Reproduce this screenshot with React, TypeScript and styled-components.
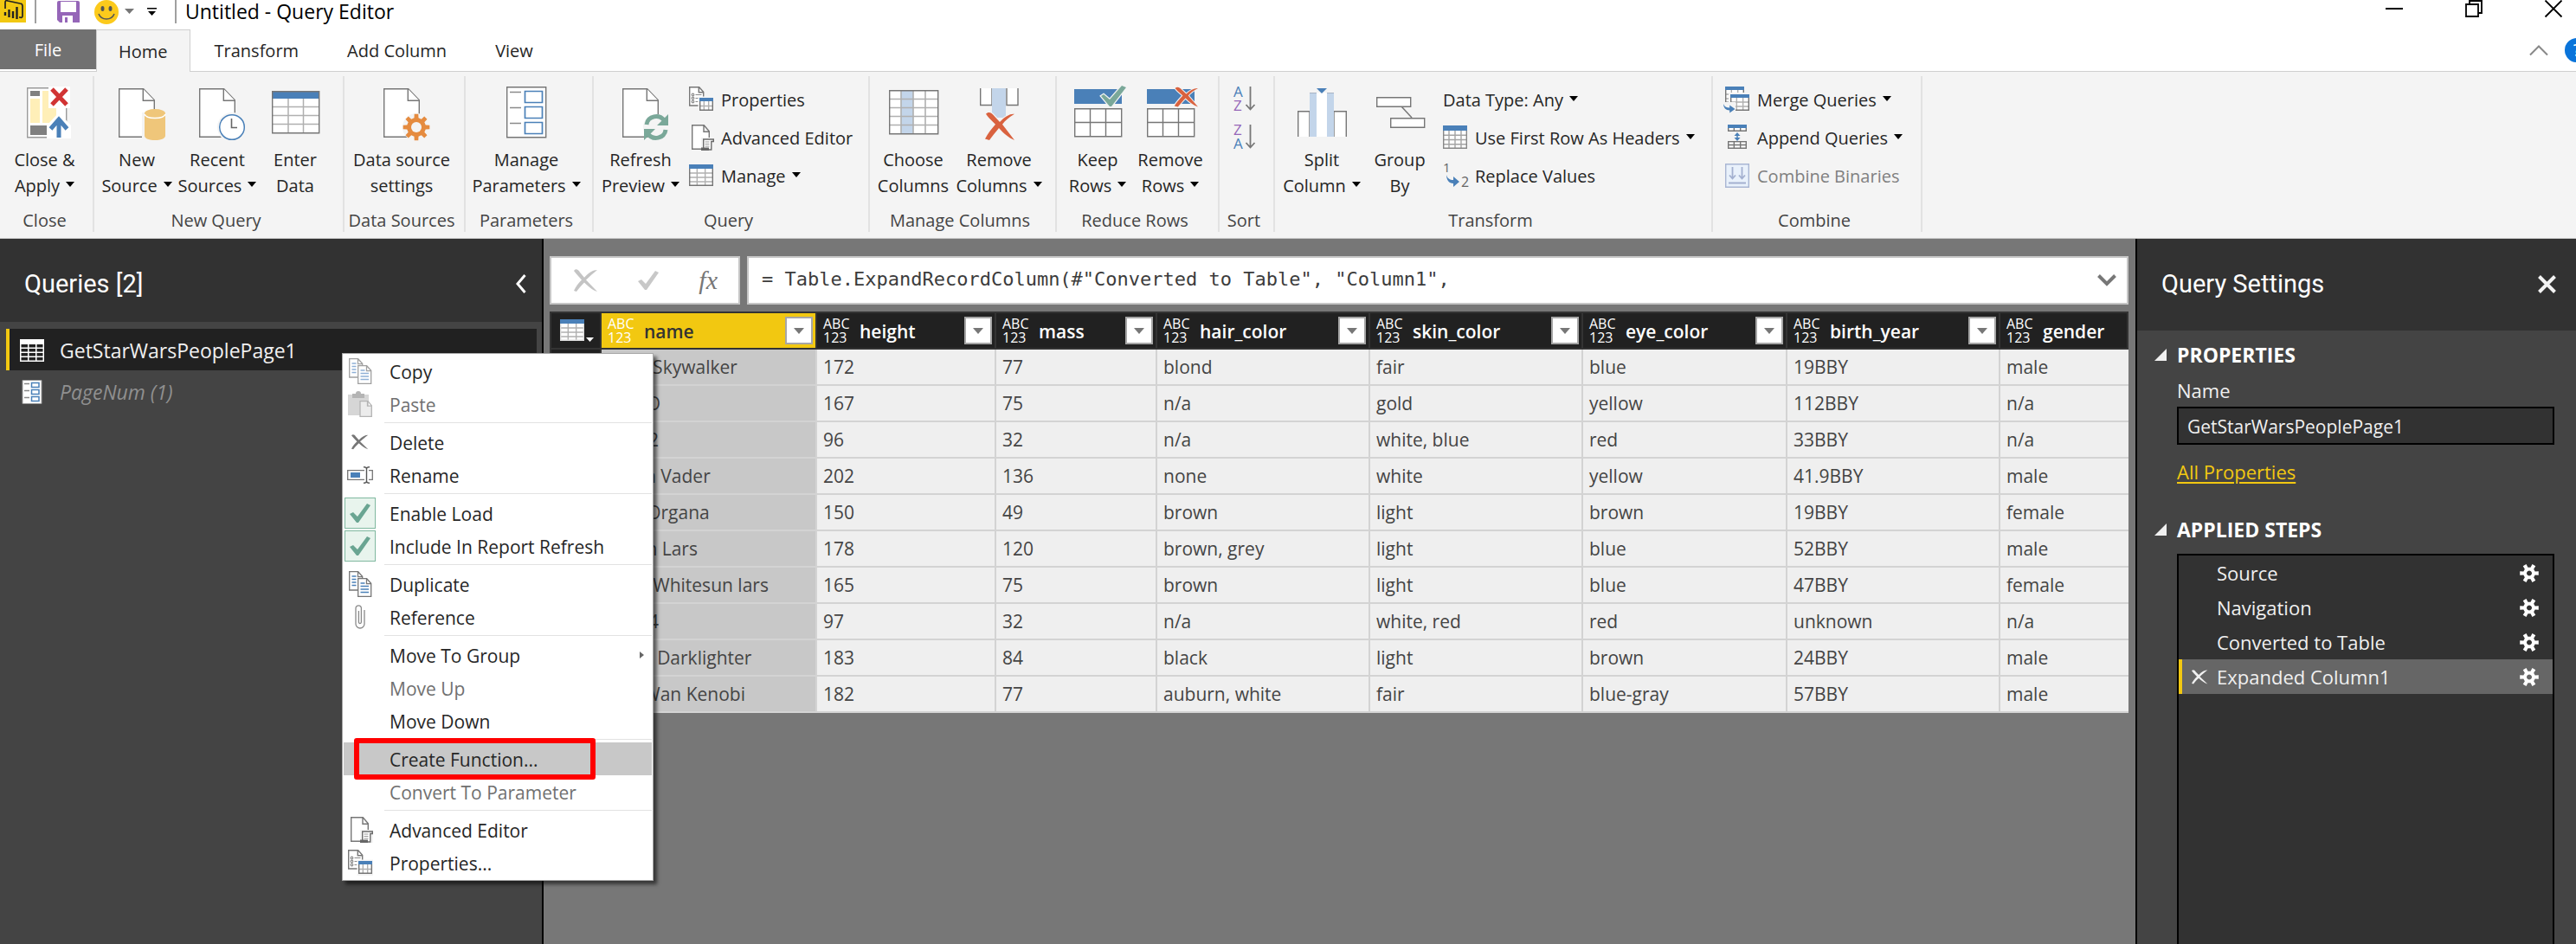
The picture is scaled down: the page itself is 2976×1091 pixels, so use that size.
import React from 'react';
import styled, { createGlobalStyle, css } from 'styled-components';

const BLUE = '#4a80b8';
const LIGHT_BLUE = '#c3d5ea';
const GREY = '#767676';
const YELLOW = '#f2c811';
const GREEN = '#7aa899';
const RED = '#d9623f';

const GlobalStyle = createGlobalStyle`
  *, *::before, *::after { box-sizing: border-box; }
  body {
    margin: 0;
    overflow: hidden;
    font-family: "Open Sans", "Noto Sans", sans-serif;
    font-size: 21px;
    line-height: 30px;
    color: #262626;
  }
  button, input {
    margin: 0;
    padding: 0;
    border: 0;
    border-radius: 0;
    background: none;
    font: inherit;
    color: inherit;
  }
  svg { display: block; flex: none; overflow: visible; }
  ul, ol { margin: 0; padding: 0; list-style: none; }
  h1, h2, h3, p { margin: 0; font: inherit; }
`;

/* ---------- shell ---------- */

const Shell = styled.div`
  display: flex;
  flex-direction: column;
  height: 100vh;
  background: #fff;
`;

const TitleBar = styled.header`
  display: flex;
  align-items: flex-start;
  height: 34px;
  color: #000;
`;

const QuickAccess = styled.div`
  display: flex;
  align-items: flex-start;
`;

const ToolButton = styled.button<{ $gap?: number }>`
  margin-left: ${p => p.$gap ?? 0}px;
`;

const BarDivider = styled.span<{ $gap: number }>`
  width: 2px;
  height: 27px;
  margin-left: ${p => p.$gap}px;
  background: #a0a0a0;
`;

const AppTitle = styled.h1`
  flex: 1;
  padding-left: 10px;
  font-size: 23px;
  line-height: 26px;
`;

const WindowControls = styled.div`
  display: flex;
  gap: 72px;
  padding-right: 16px;
`;

const TabBar = styled.nav`
  display: flex;
  height: 49px;
  border-bottom: 1px solid #cfcfcf;
  font-size: 20px;
`;

const Tab = styled.button<{ $kind?: 'file' | 'active' }>`
  height: 48px;
  padding: 2px 28px 0;
  ${p => p.$kind === 'file' && css`
    width: 111px;
    height: 46px;
    color: #fff;
    background: #717171;
  `}
  ${p => p.$kind === 'active' && css`
    height: 49px;
    padding: 2px 25px 0;
    border: 1px solid #cfcfcf;
    border-bottom: 0;
    background: #f4f4f4;
  `}
`;

const TabTools = styled.div`
  display: flex;
  align-items: center;
  gap: 19px;
  height: 48px;
  margin-left: auto;
  overflow: hidden;
`;

const HelpClip = styled.button`
  width: 13px;
  overflow: hidden;
`;

/* ---------- ribbon ---------- */

const RibbonBar = styled.div`
  display: flex;
  height: 193px;
  padding: 5px 0 7px 2px;
  border-bottom: 1px solid #c8c8c8;
  background: #f4f4f4;
  font-size: 20px;
`;

const Group = styled.section<{ $width: number }>`
  display: flex;
  flex-direction: column;
  flex: none;
  width: ${p => p.$width}px;
  padding: 12px 6px 0 0;
  border-right: 2px solid #e2e2e2;
  white-space: nowrap;
`;

const GroupBody = styled.div`
  display: flex;
  flex: 1;
`;

const GroupCaption = styled.h2`
  height: 28px;
  text-align: center;
  color: #444;
`;

const BigButton = styled.button<{ $width: number }>`
  display: flex;
  flex-direction: column;
  align-items: center;
  align-self: flex-start;
  gap: 6px;
  width: ${p => p.$width}px;
`;

const SmallColumn = styled.div<{ $indent: number }>`
  display: flex;
  flex-direction: column;
  align-items: flex-start;
  gap: 14px;
  padding-left: ${p => p.$indent}px;
`;

const SortColumn = styled(SmallColumn)`
  flex: 1;
  align-items: center;
`;

const SmallButton = styled.button`
  display: flex;
  align-items: center;
  gap: 8px;
  height: 30px;
  &:disabled { color: #808080; }
`;

const SmallText = styled.span`
  padding-top: 2px;
`;

const CaretSvg = styled.svg`
  display: inline-block;
  margin-left: 7px;
  vertical-align: 6px;
`;

const Caret = () => (
  <CaretSvg width="10" height="6" viewBox="0 0 10 6"><path d="M0 0h10L5 6z" fill="#000" /></CaretSvg>
);

/* ---------- workspace ---------- */

const Workspace = styled.main`
  position: relative;
  display: flex;
  flex: 1;
  min-height: 0;
  background: #777;
`;

const QueriesPane = styled.aside`
  display: flex;
  flex: none;
  flex-direction: column;
  width: 628px;
  border-right: 2px solid #000;
  background: #444;
  color: #f0f0f0;
`;

const PaneHeader = styled.div<{ $height: number; $end: number }>`
  display: flex;
  align-items: flex-start;
  justify-content: space-between;
  flex: none;
  height: ${p => p.$height}px;
  padding: 35px ${p => p.$end}px 0 28px;
  background: #323232;
`;

const PaneTitle = styled.h2`
  font-family: Roboto, "Open Sans", sans-serif;
  font-size: 29px;
  line-height: 34px;
  color: #fff;
`;

const PaneButton = styled.button`
  height: 34px;
`;

const QueryList = styled.ul`
  padding: 8px 6px 0 7px;
`;

const QueryItem = styled.button<{ $active?: boolean }>`
  display: flex;
  align-items: center;
  gap: 18px;
  width: 100%;
  height: 48px;
  padding: 2px 0 0 12px;
  border-left: 4px solid transparent;
  font-size: 23px;
  text-align: left;
  ${p => p.$active ? css`
    border-color: ${YELLOW};
    background: #212121;
  ` : css`
    font-style: italic;
    color: #909090;
  `}
`;

const EditorPane = styled.section`
  display: flex;
  flex: 1;
  flex-direction: column;
  gap: 8px;
  min-width: 0;
  padding: 20px 8px 0 7px;
`;

const FormulaRow = styled.div`
  display: flex;
  gap: 8px;
  height: 56px;
`;

const FormulaActions = styled.div`
  display: flex;
  align-items: center;
  justify-content: space-between;
  width: 220px;
  padding: 0 24px 0 26px;
  border: 2px solid #c6c6c6;
  background: #fff;
`;

const FxButton = styled.button`
  font-family: "Liberation Serif", serif;
  font-size: 30px;
  font-style: italic;
  color: #777;
`;

const FormulaBox = styled.div`
  display: flex;
  align-items: center;
  flex: 1;
  padding: 0 12px 0 15px;
  border: 2px solid #c6c6c6;
  background: #fff;
`;

const FormulaInput = styled.input`
  flex: 1;
  min-width: 0;
  height: 48px;
  padding-bottom: 3px;
  font-family: "DejaVu Sans Mono", "Liberation Mono", monospace;
  font-size: 22px;
  color: #3c3c3c;
`;

const GridClip = styled.div`
  overflow: hidden;
`;

const DataTable = styled.table`
  width: 100%;
  border-spacing: 0;
  table-layout: fixed;
  border-left: 2px solid #333;
`;

const HeadCell = styled.th<{ $active?: boolean }>`
  height: 44px;
  padding: 0;
  border: 2px solid #333;
  border-left: 0;
  background: ${p => (p.$active ? YELLOW : '#212121')};
  color: ${p => (p.$active ? '#333' : '#fff')};
  font-weight: 600;
  text-align: left;
`;

const HeadContent = styled.div`
  display: flex;
  align-items: center;
  gap: 13px;
  height: 40px;
  padding: 0 3px 0 7px;
`;

const TypeMark = styled.span`
  width: 29px;
  font-size: 16px;
  font-weight: 400;
  line-height: 16px;
  color: #fff;
`;

const HeadName = styled.span`
  flex: 1;
  padding-top: 2px;
`;

const FilterButton = styled.button`
  display: grid;
  place-items: center;
  width: 32px;
  height: 32px;
  border: 2px solid #a6a6a6;
  background: #fff;
`;

const TableCornerButton = styled.button`
  display: flex;
  align-items: flex-end;
  gap: 1px;
  padding-left: 10px;
`;

const RowHead = styled.td`
  border-right: 2px solid #333;
  border-bottom: 2px solid #333;
  background: #212121;
`;

const Cell = styled.td<{ $active?: boolean }>`
  height: 42px;
  padding: 0 0 0 7px;
  border-right: 2px solid #d3d3d3;
  border-bottom: 2px solid #d3d3d3;
  background: ${p => (p.$active ? '#c8c8c8' : '#efefef')};
  color: #444;
  white-space: nowrap;
  &:last-child { border-right: 0; }
`;

/* ---------- settings ---------- */

const SettingsPane = styled.aside`
  display: flex;
  flex: none;
  flex-direction: column;
  width: 509px;
  border-left: 2px solid #000;
  background: #444;
  color: #f0f0f0;
  font-size: 22px;
`;

const SettingsBody = styled.div`
  display: flex;
  flex: 1;
  flex-direction: column;
  padding: 13px 25px 0 20px;
`;

const SectionTitle = styled.h3`
  display: flex;
  align-items: center;
  gap: 12px;
  height: 30px;
  font-size: 23px;
  font-weight: 700;
  color: #fff;
`;

const Fields = styled.div`
  display: flex;
  flex-direction: column;
  align-items: flex-start;
  margin-left: 26px;
  padding: 11px 0 37px;
`;

const NameInput = styled.input`
  width: 100%;
  height: 44px;
  margin: 4px 0 16px;
  padding: 2px 10px 0;
  border: 2px solid #000;
  background: #323232;
  font-size: 21px;
`;

const PropertiesLink = styled.a`
  color: ${YELLOW};
  text-decoration: underline;
  text-underline-offset: 3px;
`;

const StepList = styled.ol`
  flex: 1;
  margin: 13px 0 0 26px;
  border: 2px solid #000;
  border-bottom: 0;
  background: #323232;
`;

const Step = styled.li<{ $active?: boolean }>`
  display: flex;
  align-items: center;
  height: 40px;
  padding: 0 16px 0 0;
  border-left: 4px solid ${p => (p.$active ? YELLOW : 'transparent')};
  background: ${p => (p.$active ? '#666' : 'transparent')};
  background-clip: padding-box;
`;

const StepMark = styled.span`
  width: 40px;
  padding-left: 11px;
`;

const StepName = styled.span`
  flex: 1;
`;

/* ---------- context menu ---------- */

const Menu = styled.div`
  position: absolute;
  left: 395px;
  top: 132px;
  width: 360px;
  padding: 1px;
  border: 1px solid #a8a8a8;
  background: #fff;
  box-shadow: 4px 4px 4px rgba(0, 0, 0, 0.55);
  color: #262626;
`;

const rowStyle = css`
  display: flex;
  align-items: center;
  width: 100%;
  height: 38px;
  text-align: left;
  white-space: nowrap;
`;

const MenuItem = styled.button<{ $hot?: boolean }>`
  ${rowStyle}
  background: ${p => (p.$hot ? '#c8c8c8' : 'transparent')};
  &:disabled { color: #707070; }
`;

const MenuCheckRow = styled.label`
  ${rowStyle}
`;

const MenuIcon = styled.span`
  display: grid;
  place-items: center;
  flex: none;
  width: 38px;
  height: 38px;
  margin-right: 15px;
  > * { grid-area: 1 / 1; }
`;

const MenuText = styled.span`
  flex: 1;
  padding-top: 2px;
`;

const MenuTick = styled.input`
  appearance: none;
  width: 36px;
  height: 36px;
  border: 1px solid #7fb89f;
  background: #e8f4ed;
`;

const TickMark = styled.svg`
  pointer-events: none;
`;

const MenuRule = styled.hr`
  height: 1px;
  margin: 2px 0 3px 47px;
  border: 0;
  background: #e2e2e2;
`;

const SubmenuArrow = styled.svg`
  margin-right: 9px;
`;

const Callout = styled.div`
  position: absolute;
  left: 13px;
  top: 444px;
  width: 279px;
  height: 48px;
  border: 6px solid #ff0000;
  border-radius: 3px;
  pointer-events: none;
`;

/* ---------- drawings ---------- */

const Big = ({ children }: { children: React.ReactNode }) => (
  <svg width="68" height="64" viewBox="0 0 68 64" fill="none" aria-hidden="true">{children}</svg>
);

const Page = () => (
  <g stroke={GREY} strokeWidth="1.4" fill="#fff">
    <path d="M13.7 2.7h28l12.6 13v42.6H13.7z" />
    <path d="M41.3 2.7v13.6h13" />
  </g>
);

const gearPath = (cx: number, cy: number, outer: number, inner: number, n: number) => {
  const pts: string[] = [];
  const step = (Math.PI * 2) / n;
  for (let i = 0; i < n; i++) {
    const a = i * step;
    [[-0.29, inner], [-0.19, outer], [0.19, outer], [0.29, inner]].forEach(([f, r]) => {
      pts.push(`${(cx + r * Math.cos(a + f * step)).toFixed(2)} ${(cy + r * Math.sin(a + f * step)).toFixed(2)}`);
    });
  }
  return `M${pts.join('L')}z`;
};

const lines = (x: number[], y: number[], x0: number, x1: number, y0: number, y1: number) =>
  x.map(v => `M${v} ${y0}V${y1}`).join('') + y.map(v => `M${x0} ${v}H${x1}`).join('');

const brushX = 'M2 4C5-1 9 2 12 8L18 17C24 8 30 3 35 4C29 9 24 15 21 21L35 47C28 43 22 35 17 27C13 34 9 41 6 47L1 45C4 36 9 28 13 21L6 11C4 8 3 6 2 4z';

const CloseApplyIcon = () => (
  <Big>
    <path d="M13.7 1.7h45v57h-45z" fill="#fff" stroke="#9a9a9a" strokeWidth="1.4" />
    <path d="M17 5h11v6H17zM17 45h20v11H17z" fill="#808080" />
    <path d="M17 14h11v28H17zM31 5h16v37H31z" fill="#ffefb8" />
    <path d="M38 0h25v25H38zM36 60V45L50 30l14 15v15z" fill="#fff" />
    <path d="M42 3l17 18M59 3L42 21" stroke="#d13434" strokeWidth="5" />
    <path d="M50 59V38M40.5 49L50 38l9.5 11" stroke={BLUE} strokeWidth="5" />
  </Big>
);

const NewSourceIcon = () => (
  <Big>
    <Page />
    <path d="M40 30h28v34H40z" fill="#f4f4f4" />
    <path d="M43 31v26c0 3 5.5 5 12 5s12-2 12-5V31z" fill="#efc67a" />
    <ellipse cx="55" cy="31" rx="12" ry="5" fill="#efc67a" />
    <path d="M43 32c1 3 6 4.5 12 4.5S66 35 67 32" stroke="#fff" strokeWidth="1.5" />
  </Big>
);

const RecentIcon = () => (
  <Big>
    <Page />
    <circle cx="51" cy="47" r="17" fill="#f4f4f4" />
    <circle cx="51" cy="47" r="14.3" fill="#fff" stroke={BLUE} strokeWidth="1.5" />
    <path d="M50.5 37v10.5H57" stroke="#666" strokeWidth="1.6" />
  </Big>
);

const EnterDataIcon = () => (
  <Big>
    <path d="M7.7 5.7h54v48h-54z" fill="#fff" />
    <path d="M7 5h55v9H7z" fill={BLUE} />
    <path d={lines([26, 43.5], [23.5, 33.5, 43.5], 8, 62, 14, 54)} stroke="#b0b0b0" strokeWidth="1.5" />
    <path d="M7.7 5.7h54v48h-54z" stroke={GREY} strokeWidth="1.4" />
  </Big>
);

const DataSourceIcon = () => (
  <Big>
    <Page />
    <circle cx="51" cy="47" r="16" fill="#f4f4f4" />
    <path d={gearPath(51, 47, 15.5, 11, 8)} fill="#e58b3f" />
    <circle cx="51" cy="47" r="6" fill="#f4f4f4" />
  </Big>
);

const ParametersIcon = () => (
  <Big>
    <path d="M11.7 .7h45v58h-45z" fill="#fff" stroke={GREY} strokeWidth="1.4" />
    <path d="M15 6.5h13M15 24.5h13M15 42.5h13" stroke="#8a8a8a" strokeWidth="1.4" />
    <path d="M32.5 5.5h20v13h-20zM32.5 23.5h20v13h-20zM32.5 41.5h20v13h-20z" stroke={BLUE} strokeWidth="1.7" />
  </Big>
);

const RefreshIcon = () => (
  <Big>
    <Page />
    <circle cx="52" cy="47" r="15" fill="#f4f4f4" />
    <path d="M41 44c1-10 15-13 21-4M63 50c-1 10-15 13-21 4" stroke={GREEN} strokeWidth="5" />
    <path d="M66 32v13H53zM38 62V49h13z" fill={GREEN} />
  </Big>
);

const ChooseColumnsIcon = () => (
  <Big>
    <path d="M6.7 4.7h56v50h-56z" fill="#fff" />
    <path d="M20 5h14v50H20z" fill={LIGHT_BLUE} />
    <path d={lines([20, 34, 48], [14.5, 24.5, 34.5, 44.5], 7, 63, 5, 55)} stroke="#b0b0b0" strokeWidth="1.6" />
    <path d="M6.7 4.7h56v50h-56z" stroke={GREY} strokeWidth="1.4" />
  </Big>
);

const RemoveColumnsIcon = () => (
  <Big>
    <path d="M12.7 2v19.5H26V2M56 2v19.5H43V2" fill="#fff" stroke={GREY} strokeWidth="1.4" />
    <path d="M26 2h16v34H26z" fill={LIGHT_BLUE} />
    <path d={brushX} transform="translate(17 29) scale(1 .7)" fill={RED} stroke="#f4f4f4" strokeWidth="3" paintOrder="stroke" />
  </Big>
);

const RowsBase = () => (
  <>
    <path d="M7 3h55v17H7z" fill={BLUE} />
    <path d="M7.7 25.7h54v32h-54z" fill="#fff" stroke={GREY} strokeWidth="1.4" />
    <path d={lines([25.5, 43.5], [41.5], 7, 62, 26, 58)} stroke={GREY} strokeWidth="1.4" />
  </>
);

const KeepRowsIcon = () => (
  <Big>
    <RowsBase />
    <path d="M38 11l3-2 7 6L62-1l5 2-17 22h-2z" fill={GREEN} stroke="#f4f4f4" strokeWidth="2.5" paintOrder="stroke" />
  </Big>
);

const RemoveRowsIcon = () => (
  <Big>
    <RowsBase />
    <path d={brushX} transform="translate(38 0) scale(.8 .5)" fill={RED} stroke="#f4f4f4" strokeWidth="3" paintOrder="stroke" />
  </Big>
);

const SplitIcon = () => (
  <Big>
    <path d="M6.7 58V28.7H20V58M62.3 58V28.7H48V58" fill="#fff" stroke={GREY} strokeWidth="1.4" />
    <path d="M28 7h12v51H28z" fill="#fff" />
    <path d="M20 7h8v51h-8zM40 7h8v51h-8z" fill={LIGHT_BLUE} />
    <path d="M20 7.5h8M40 7.5h8" stroke="#a8b4c4" />
    <path d="M28 2h12l-6 6z" fill={BLUE} />
  </Big>
);

const GroupByIcon = () => (
  <Big>
    <path d="M36 23l12 13" stroke={GREY} strokeWidth="1.5" />
    <path d="M7.7 12.7h39v10.6h-39zM23.7 36.7h39v10.6h-39z" fill="#fff" stroke={GREY} strokeWidth="1.4" />
  </Big>
);

const GridIcon = ({ x = 0, y = 0, w = 28, h = 25, head = 5, cols = 3, rows = 4, color = BLUE, line = '#b0b0b0', edge = GREY }: {
  x?: number; y?: number; w?: number; h?: number; head?: number; cols?: number; rows?: number;
  color?: string; line?: string; edge?: string;
}) => {
  const xs = Array.from({ length: cols - 1 }, (_, i) => x + (w * (i + 1)) / cols);
  const ys = Array.from({ length: rows - 1 }, (_, i) => y + head + ((h - head) * (i + 1)) / rows);
  return (
    <g fill="none">
      <path d={`M${x} ${y}h${w}v${h}h${-w}z`} fill="#fff" />
      <path d={`M${x} ${y}h${w}v${head}h${-w}z`} fill={color} />
      <path d={lines(xs, ys, x, x + w, y + head, y + h)} stroke={line} strokeWidth="1.4" />
      <path d={`M${x + w - 0.7} ${y + head}V${y + h - 0.7}H${x + 0.7}V${y + head}`} stroke={edge} strokeWidth="1.4" />
    </g>
  );
};

const Small = ({ children, w = 29 }: { children: React.ReactNode; w?: number }) => (
  <svg width={w} height="30" viewBox={`0 0 ${w} 30`} fill="none" aria-hidden="true">{children}</svg>
);

const PropertiesIcon = () => (
  <Small>
    <path d="M.7 .7h11l5 5.5V22H.7zM11.3 .7v6h5.4" fill="#fff" stroke={GREY} strokeWidth="1.4" />
    <g stroke="#8a8a8a" strokeWidth="1.2">
      <circle cx="4.5" cy="9.5" r="1.3" /><circle cx="4.5" cy="13.5" r="1.3" /><circle cx="4.5" cy="17.5" r="1.3" />
      <path d="M7.5 9.5h7M7.5 13.5h5M7.5 17.5h3" />
    </g>
    <path d="M10.5 11.5H29V30H10.5z" fill="#f4f4f4" />
    <GridIcon x={12} y={13} w={16} h={15} head={4} rows={2} />
  </Small>
);

const AdvancedIcon = () => (
  <Small>
    <path d="M3.7 .7h13.6l6 7v20.6H3.7zM17 .7v7.5h6" fill="#fff" stroke={GREY} strokeWidth="1.4" />
    <path d="M14 15h15v15H14z" fill="#f4f4f4" />
    <path d="M16.7 27V17h11.6v2.5h-2.5V29h-10" fill="#fff" stroke="#6a6a6a" strokeWidth="1.4" />
    <path d="M18.5 20h5M18.5 22.5h5M18.5 25h5" stroke="#999" strokeWidth="1.2" />
    <path d="M14 26.5h9V30h-9z" fill="#666" />
  </Small>
);

const ManageIcon = () => <Small><GridIcon y={2} /></Small>;

const HeadersIcon = () => <Small><GridIcon y={1} h={27} head={6} cols={4} rows={4} edge="#888" line="#a4a4a4" /></Small>;

const hookArrow = 'M0 0C1 4 4 6 8 6V2L15 8 8 14V10C3 10 0 6 0 0z';

const ReplaceIcon = () => (
  <Small>
    <text x="0" y="11" fontSize="15" fill="#666">1</text>
    <text x="21" y="28" fontSize="16" fill="#666">2</text>
    <path d={hookArrow} transform="translate(4 14)" fill={BLUE} />
  </Small>
);

const MergeIcon = () => (
  <Small w={31}>
    <GridIcon x={2} y={0} w={22} h={19} head={4} rows={3} />
    <path d="M6 7h25v22H12V20H6z" fill="#f4f4f4" />
    <GridIcon x={8} y={9} w={22} h={19} head={4} rows={3} />
    <path d="M0 18h14v12H0z" fill="#f4f4f4" />
    <path d={hookArrow} transform="translate(0 20) scale(.9 .75)" fill={BLUE} />
  </Small>
);

const AppendIcon = () => (
  <Small w={31}>
    <GridIcon x={5} y={0} w={22} h={8} head={4} rows={1} line={GREY} />
    <GridIcon x={5} y={19} w={22} h={9} head={0} rows={2} line={GREY} />
    <path d="M5 19.7h22" stroke={GREY} strokeWidth="1.4" />
    <path d="M16 9l3.5 4h-7zM16 19l3.5-4h-7z" fill={BLUE} />
    <path d="M16 11v6" stroke={BLUE} strokeWidth="1.5" />
  </Small>
);

const CombineIcon = () => (
  <Small w={31}>
    <path d="M2.7 1.7h26.6v26.6H2.7z" fill="#e9f1fb" stroke="#a9b6d3" strokeWidth="1.4" />
    <path d="M10.5 5v13M7 14.5l3.5 4 3.5-4M21.5 5v13M18 14.5l3.5 4 3.5-4M6 23.5h20" stroke="#a3b0d0" strokeWidth="1.8" />
  </Small>
);

const SortIcon = ({ top, bottom }: { top: string; bottom: string }) => (
  <Small w={27}>
    <text x="1" y="12" fontSize="17" fill={top === 'A' ? BLUE : '#9566b8'}>{top}</text>
    <text x="1" y="28" fontSize="17" fill={bottom === 'A' ? BLUE : '#9566b8'}>{bottom}</text>
    <path d="M20.5 0v26M15.5 21l5 5.5 5-5.5" stroke="#777" strokeWidth="1.8" />
  </Small>
);

const LogoIcon = () => (
  <svg width="30" height="26" viewBox="0 0 30 26" fill="none" aria-hidden="true">
    <path d="M0 0h30v26H0z" fill={YELLOW} />
    <path d="M6 10V3c0-2 1-3 3-2l14 3c2 0 3 1 3 3v11c0 2-1 3-3 2h-1" stroke="#222" strokeWidth="1.7" />
    <path d="M6 14v4M10.5 11v9M15 13v8M19.5 8v14" stroke="#222" strokeWidth="2.4" />
  </svg>
);

const SaveIcon = () => (
  <svg width="26" height="26" viewBox="0 0 26 26" aria-hidden="true">
    <path d="M0 3q0-2 2-2h22q2 0 2 2v23H3l-3-3z" fill="#9566b8" />
    <path d="M4 2h18v12H4zM6 18h12v8H6z" fill="#fff" />
    <path d="M9 20h3v6H9z" fill="#9566b8" />
  </svg>
);

const SmileIcon = () => (
  <svg width="28" height="28" viewBox="0 0 28 28" fill="none" aria-hidden="true">
    <circle cx="14" cy="14" r="14" fill="#fcca1c" />
    <ellipse cx="9.5" cy="10" rx="2" ry="3" fill="#555" />
    <ellipse cx="18.5" cy="10" rx="2" ry="3" fill="#555" />
    <path d="M5 16c3 8 15 8 18 0" stroke="#555" strokeWidth="1.6" />
  </svg>
);

const SmallCaret = () => (
  <svg width="11" height="16" viewBox="0 0 11 16" aria-hidden="true"><path d="M0 10h11L5.5 16z" fill="#777" /></svg>
);

const CustomizeCaret = () => (
  <svg width="11" height="18" viewBox="0 0 11 18" aria-hidden="true"><path d="M0 9h11v1.5H0zM1 13h9l-4.5 5z" fill="#000" /></svg>
);

const brushThin = 'M0 2C2-1 5 0 7 4L12 10C17 4 22 1 27 1C22 5 18 9 14 13L27 27C21 25 16 20 12 16C8 20 5 24 3 27L0 26C2 21 6 16 9 13L3 6z';

const BrushX = ({ w, h, color }: { w: number; h: number; color: string }) => (
  <svg width={w} height={h} viewBox="0 0 28 28" preserveAspectRatio="none" aria-hidden="true">
    <path d={brushThin} fill={color} />
  </svg>
);

const Tick = ({ color }: { color: string }) => (
  <TickMark width="24" height="22" viewBox="0 0 24 22" aria-hidden="true">
    <path d="M0 12l4-2 5 5L20 0l4 2L10 22H8z" fill={color} />
  </TickMark>
);

const CopyIcon = ({ soft }: { soft?: boolean }) => {
  const edge = soft ? '#a0a0a0' : GREY;
  const ink = soft ? '#8fb0d6' : BLUE;
  return (
    <svg width="27" height="30" viewBox="0 0 27 30" fill="none" aria-hidden="true">
      <path d="M.7 .7h10l5 5.5V22H.7zM10.5 .7v6h5" fill="#fff" stroke={edge} strokeWidth="1.3" />
      <path d="M3.5 6h5M3.5 9.5h5M3.5 13h5M3.5 16.5h5" stroke={ink} strokeWidth="1.3" />
      <path d="M10.7 8.7h10l5 5.5v15.1h-15zM20.5 8.7v6h5" fill="#fff" stroke={edge} strokeWidth="1.3" />
      <path d="M13.5 14h5M13.5 17.5h9.5M13.5 21h9.5M13.5 24.5h9.5" stroke={ink} strokeWidth="1.3" />
    </svg>
  );
};

const PasteIcon = () => (
  <svg width="28" height="30" viewBox="0 0 28 30" fill="none" aria-hidden="true">
    <path d="M0 4h24v24H0z" fill="#d6d6d6" />
    <path d="M5 3h4a3 3 0 0 1 6 0h4v5H5z" fill="#b4b4b4" />
    <path d="M14 11.7h9l4.3 5v12.6H14zM22.5 11.7v5.5h5" fill="#ececec" stroke="#b4b4b4" strokeWidth="1.3" />
  </svg>
);

const RenameIcon = () => (
  <svg width="30" height="20" viewBox="0 0 30 20" fill="none" aria-hidden="true">
    <path d="M20 4.7H.7v10.6H20M25 4.7h4.3v10.6H25" stroke={GREY} strokeWidth="1.3" />
    <path d="M4 7h11v6H4z" fill={BLUE} />
    <path d="M19 .7c3 0 3.5 1 3.5 2v14.6c0 1-.5 2-3.5 2M26 .7c-3 0-3.5 1-3.5 2M26 19.3c-3 0-3.5-1-3.5-2" stroke="#555" strokeWidth="1.4" />
  </svg>
);

const ClipIcon = () => (
  <svg width="12" height="28" viewBox="0 0 12 28" fill="none" aria-hidden="true">
    <path d="M11 6v16a5 5 0 0 1-10 0V4a3.2 3.2 0 0 1 6.4 0v16a1.5 1.5 0 0 1-3 0V7" stroke="#8a8a8a" strokeWidth="1.3" />
  </svg>
);

const StepGear = () => (
  <svg width="22" height="21" viewBox="0 0 22 21" aria-hidden="true">
    <path fillRule="evenodd" fill="#fff" d={`${gearPath(11, 10.5, 11, 7, 6)}M11 7.5a3 3 0 1 0 .01 0z`} />
  </svg>
);

const Fold = () => (
  <svg width="14" height="14" viewBox="0 0 14 14" aria-hidden="true"><path d="M14 0v14H0z" fill="#f0f0f0" /></svg>
);

/* ---------- data ---------- */

const columns = [
  { name: 'name', width: 249 },
  { name: 'height', width: 207 },
  { name: 'mass', width: 186 },
  { name: 'hair_color', width: 246 },
  { name: 'skin_color', width: 246 },
  { name: 'eye_color', width: 236 },
  { name: 'birth_year', width: 246 },
  { name: 'gender', width: 0 },
];

const people = [
  ['Luke Skywalker', '172', '77', 'blond', 'fair', 'blue', '19BBY', 'male'],
  ['C-3PO', '167', '75', 'n/a', 'gold', 'yellow', '112BBY', 'n/a'],
  ['R2-D2', '96', '32', 'n/a', 'white, blue', 'red', '33BBY', 'n/a'],
  ['Darth Vader', '202', '136', 'none', 'white', 'yellow', '41.9BBY', 'male'],
  ['Leia Organa', '150', '49', 'brown', 'light', 'brown', '19BBY', 'female'],
  ['Owen Lars', '178', '120', 'brown, grey', 'light', 'blue', '52BBY', 'male'],
  ['Beru Whitesun lars', '165', '75', 'brown', 'light', 'blue', '47BBY', 'female'],
  ['R5-D4', '97', '32', 'n/a', 'white, red', 'red', 'unknown', 'n/a'],
  ['Biggs Darklighter', '183', '84', 'black', 'light', 'brown', '24BBY', 'male'],
  ['Obi-Wan Kenobi', '182', '77', 'auburn, white', 'fair', 'blue-gray', '57BBY', 'male'],
];

const steps = ['Source', 'Navigation', 'Converted to Table', 'Expanded Column1'];

const RibbonButton = ({ icon, top, bottom, width, menu }: {
  icon: React.ReactNode; top: string; bottom: string; width: number; menu?: boolean;
}) => (
  <BigButton $width={width}>
    {icon}
    <span>{top}<br />{bottom}{menu && <Caret />}</span>
  </BigButton>
);

const RibbonRow = ({ icon, text, menu, disabled }: {
  icon?: React.ReactNode; text: string; menu?: boolean; disabled?: boolean;
}) => (
  <SmallButton disabled={disabled}>
    {icon}
    <SmallText>{text}{menu && <Caret />}</SmallText>
  </SmallButton>
);

const RibbonGroup = ({ caption, width, children }: { caption: string; width: number; children: React.ReactNode }) => (
  <Group $width={width}>
    <GroupBody>{children}</GroupBody>
    <GroupCaption>{caption}</GroupCaption>
  </Group>
);

const Ribbon = () => (
  <RibbonBar>
    <RibbonGroup caption="Close" width={107}>
      <RibbonButton icon={<CloseApplyIcon />} top="Close &" bottom="Apply" width={101} menu />
    </RibbonGroup>
    <RibbonGroup caption="New Query" width={289}>
      <RibbonButton icon={<NewSourceIcon />} top="New" bottom="Source" width={98} menu />
      <RibbonButton icon={<RecentIcon />} top="Recent" bottom="Sources" width={88} menu />
      <RibbonButton icon={<EnterDataIcon />} top="Enter" bottom="Data" width={92} />
    </RibbonGroup>
    <RibbonGroup caption="Data Sources" width={140}>
      <RibbonButton icon={<DataSourceIcon />} top="Data source" bottom="settings" width={132} />
    </RibbonGroup>
    <RibbonGroup caption="Parameters" width={148}>
      <RibbonButton icon={<ParametersIcon />} top="Manage" bottom="Parameters" width={140} menu />
    </RibbonGroup>
    <RibbonGroup caption="Query" width={319}>
      <RibbonButton icon={<RefreshIcon />} top="Refresh" bottom="Preview" width={108} menu />
      <SmallColumn $indent={2}>
        <RibbonRow icon={<PropertiesIcon />} text="Properties" />
        <RibbonRow icon={<AdvancedIcon />} text="Advanced Editor" />
        <RibbonRow icon={<ManageIcon />} text="Manage" menu />
      </SmallColumn>
    </RibbonGroup>
    <RibbonGroup caption="Manage Columns" width={216}>
      <RibbonButton icon={<ChooseColumnsIcon />} top="Choose" bottom="Columns" width={100} />
      <RibbonButton icon={<RemoveColumnsIcon />} top="Remove" bottom="Columns" width={98} menu />
    </RibbonGroup>
    <RibbonGroup caption="Reduce Rows" width={188}>
      <RibbonButton icon={<KeepRowsIcon />} top="Keep" bottom="Rows" width={94} menu />
      <RibbonButton icon={<RemoveRowsIcon />} top="Remove" bottom="Rows" width={74} menu />
    </RibbonGroup>
    <RibbonGroup caption="Sort" width={64}>
      <SortColumn $indent={0}>
        <SmallButton aria-label="Sort ascending"><SortIcon top="A" bottom="Z" /></SmallButton>
        <SmallButton aria-label="Sort descending"><SortIcon top="Z" bottom="A" /></SmallButton>
      </SortColumn>
    </RibbonGroup>
    <RibbonGroup caption="Transform" width={506}>
      <RibbonButton icon={<SplitIcon />} top="Split" bottom="Column" width={108} menu />
      <RibbonButton icon={<GroupByIcon />} top="Group" bottom="By" width={72} />
      <SmallColumn $indent={14}>
        <RibbonRow text="Data Type: Any" menu />
        <RibbonRow icon={<HeadersIcon />} text="Use First Row As Headers" menu />
        <RibbonRow icon={<ReplaceIcon />} text="Replace Values" />
      </SmallColumn>
    </RibbonGroup>
    <RibbonGroup caption="Combine" width={242}>
      <SmallColumn $indent={12}>
        <RibbonRow icon={<MergeIcon />} text="Merge Queries" menu />
        <RibbonRow icon={<AppendIcon />} text="Append Queries" menu />
        <RibbonRow icon={<CombineIcon />} text="Combine Binaries" disabled />
      </SmallColumn>
    </RibbonGroup>
  </RibbonBar>
);

const Item = ({ icon, text, disabled, hot, children }: {
  icon?: React.ReactNode; text: string; disabled?: boolean; hot?: boolean; children?: React.ReactNode;
}) => (
  <MenuItem role="menuitem" disabled={disabled} $hot={hot}>
    <MenuIcon>{icon}</MenuIcon>
    <MenuText>{text}</MenuText>
    {children}
  </MenuItem>
);

const CheckItem = ({ text }: { text: string }) => (
  <MenuCheckRow>
    <MenuIcon>
      <MenuTick type="checkbox" defaultChecked />
      <Tick color="#6aa592" />
    </MenuIcon>
    <MenuText>{text}</MenuText>
  </MenuCheckRow>
);

const ContextMenu = () => (
  <Menu role="menu">
    <Item icon={<CopyIcon soft />} text="Copy" />
    <Item icon={<PasteIcon />} text="Paste" disabled />
    <MenuRule />
    <Item icon={<BrushX w={20} h={18} color="#777" />} text="Delete" />
    <Item icon={<RenameIcon />} text="Rename" />
    <MenuRule />
    <CheckItem text="Enable Load" />
    <CheckItem text="Include In Report Refresh" />
    <MenuRule />
    <Item icon={<CopyIcon />} text="Duplicate" />
    <Item icon={<ClipIcon />} text="Reference" />
    <MenuRule />
    <Item text="Move To Group">
      <SubmenuArrow width="5" height="8" viewBox="0 0 5 8"><path d="M0 0l5 4-5 4z" fill="#666" /></SubmenuArrow>
    </Item>
    <Item text="Move Up" disabled />
    <Item text="Move Down" />
    <MenuRule />
    <Item text="Create Function..." hot />
    <Item text="Convert To Parameter" disabled />
    <MenuRule />
    <Item icon={<AdvancedIcon />} text="Advanced Editor" />
    <Item icon={<PropertiesIcon />} text="Properties..." />
    <Callout />
  </Menu>
);

export default function App() {
  return (
    <Shell>
      <GlobalStyle />
      <TitleBar>
        <QuickAccess>
          <LogoIcon />
          <BarDivider $gap={10} />
          <ToolButton $gap={24} aria-label="Save"><SaveIcon /></ToolButton>
          <ToolButton $gap={17} aria-label="Send feedback"><SmileIcon /></ToolButton>
          <ToolButton $gap={7} aria-label="Feedback options"><SmallCaret /></ToolButton>
          <ToolButton $gap={15} aria-label="Customize toolbar"><CustomizeCaret /></ToolButton>
          <BarDivider $gap={21} />
        </QuickAccess>
        <AppTitle>Untitled - Query Editor</AppTitle>
        <WindowControls>
          <button aria-label="Minimize">
            <svg width="20" height="20" viewBox="0 0 20 20"><path d="M0 9h20v2H0z" /></svg>
          </button>
          <button aria-label="Restore">
            <svg width="20" height="20" viewBox="0 0 20 20" fill="none" stroke="#000" strokeWidth="1.8"><path d="M1 5h14v14H1zM5 5V1h14v14h-4" /></svg>
          </button>
          <button aria-label="Close">
            <svg width="20" height="20" viewBox="0 0 20 20" stroke="#000" strokeWidth="1.8"><path d="M.5 .5l19 19M19.5 .5l-19 19" /></svg>
          </button>
        </WindowControls>
      </TitleBar>
      <TabBar>
        <Tab $kind="file">File</Tab>
        <Tab $kind="active">Home</Tab>
        <Tab>Transform</Tab>
        <Tab>Add Column</Tab>
        <Tab>View</Tab>
        <TabTools>
          <button aria-label="Collapse ribbon">
            <svg width="22" height="12" viewBox="0 0 22 12" fill="none" stroke="#888" strokeWidth="2"><path d="M1 11.5L11 1.5l10 10" /></svg>
          </button>
          <HelpClip aria-label="Help">
            <svg width="28" height="28" viewBox="0 0 28 28">
              <circle cx="14" cy="14" r="14" fill="#0a74da" />
              <text x="14" y="21" textAnchor="middle" fontSize="20" fill="#fff">?</text>
            </svg>
          </HelpClip>
        </TabTools>
      </TabBar>
      <Ribbon />
      <Workspace>
        <QueriesPane>
          <PaneHeader $height={96} $end={18}>
            <PaneTitle>Queries [2]</PaneTitle>
            <PaneButton aria-label="Collapse pane">
              <svg width="12" height="22" viewBox="0 0 12 22" fill="none" stroke="#fff" strokeWidth="3"><path d="M10.5 1L2 11l8.5 10" /></svg>
            </PaneButton>
          </PaneHeader>
          <QueryList>
            <li>
              <QueryItem $active>
                <svg width="28" height="26" viewBox="0 0 28 26">
                  <path d="M0 0h28v26H0z" fill="#fff" />
                  <path d="M1.5 6h7.5v3.5H1.5zM10.5 6h7.5v3.5h-7.5zM19.5 6h7v3.5h-7zM1.5 11h7.5v3.5H1.5zM10.5 11h7.5v3.5h-7.5zM19.5 11h7v3.5h-7zM1.5 16h7.5v3.5H1.5zM10.5 16h7.5v3.5h-7.5zM19.5 16h7v3.5h-7zM1.5 21h7.5v3.5H1.5zM10.5 21h7.5v3.5h-7.5zM19.5 21h7v3.5h-7z" fill="#212121" />
                </svg>
                GetStarWarsPeoplePage1
              </QueryItem>
            </li>
            <li>
              <QueryItem>
                <svg width="28" height="28" viewBox="0 0 28 28" fill="none">
                  <path d="M3 .5h22v27H3z" fill="#fff" stroke="#999" />
                  <path d="M5 4.5h6M5 12.5h6M5 20.5h6" stroke="#888" strokeWidth="1.3" />
                  <path d="M13.5 3.5h8.5v5h-8.5zM13.5 11.5h8.5v5h-8.5zM13.5 19.5h8.5v5h-8.5z" stroke={BLUE} strokeWidth="1.5" />
                </svg>
                PageNum (1)
              </QueryItem>
            </li>
          </QueryList>
        </QueriesPane>
        <EditorPane>
          <FormulaRow>
            <FormulaActions>
              <button aria-label="Cancel"><BrushX w={28} h={27} color="#c4c4c4" /></button>
              <button aria-label="Commit"><Tick color="#c8c8c8" /></button>
              <FxButton>fx</FxButton>
            </FormulaActions>
            <FormulaBox>
              <FormulaInput aria-label="Formula" defaultValue={'= Table.ExpandRecordColumn(#"Converted to Table", "Column1",'} />
              <button aria-label="Expand formula bar">
                <svg width="22" height="14" viewBox="0 0 22 14" fill="none" stroke="#777" strokeWidth="4"><path d="M1.5 1.5L11 11l9.5-9.5" /></svg>
              </button>
            </FormulaBox>
          </FormulaRow>
          <GridClip>
            <DataTable>
              <colgroup>
                <col width={58} />
                {columns.map(c => <col key={c.name} width={c.width || undefined} />)}
              </colgroup>
              <thead>
                <tr>
                  <HeadCell>
                    <TableCornerButton aria-label="Table options">
                      <svg width="29" height="26" viewBox="0 0 29 26"><GridIcon w={28} h={25} edge="#ddd" /></svg>
                      <svg width="9" height="5" viewBox="0 0 9 5"><path d="M0 0h9L4.5 5z" fill="#fff" /></svg>
                    </TableCornerButton>
                  </HeadCell>
                  {columns.map((c, i) => (
                    <HeadCell key={c.name} $active={i === 0}>
                      <HeadContent>
                        <TypeMark>ABC 123</TypeMark>
                        <HeadName>{c.name}</HeadName>
                        {c.width > 0 && (
                          <FilterButton aria-label={`Filter ${c.name}`}>
                            <svg width="12" height="7" viewBox="0 0 12 7"><path d="M0 0h12L6 7z" fill="#777" /></svg>
                          </FilterButton>
                        )}
                      </HeadContent>
                    </HeadCell>
                  ))}
                </tr>
              </thead>
              <tbody>
                {people.map(row => (
                  <tr key={row[0]}>
                    <RowHead />
                    {row.map((value, i) => <Cell key={columns[i].name} $active={i === 0}>{value}</Cell>)}
                  </tr>
                ))}
              </tbody>
            </DataTable>
          </GridClip>
        </EditorPane>
        <SettingsPane>
          <PaneHeader $height={106} $end={23}>
            <PaneTitle>Query Settings</PaneTitle>
            <PaneButton aria-label="Close pane">
              <svg width="21" height="21" viewBox="0 0 21 21" stroke="#f4f4f4" strokeWidth="4"><path d="M1.5 1.5l18 18M19.5 1.5l-18 18" /></svg>
            </PaneButton>
          </PaneHeader>
          <SettingsBody>
            <SectionTitle><Fold />PROPERTIES</SectionTitle>
            <Fields>
              <label htmlFor="query-name">Name</label>
              <NameInput id="query-name" defaultValue="GetStarWarsPeoplePage1" />
              <PropertiesLink href="#properties">All Properties</PropertiesLink>
            </Fields>
            <SectionTitle><Fold />APPLIED STEPS</SectionTitle>
            <StepList>
              {steps.map((s, i) => (
                <Step key={s} $active={i === 3}>
                  <StepMark>{i === 3 && <BrushX w={19} h={17} color="#f0f0f0" />}</StepMark>
                  <StepName>{s}</StepName>
                  <button aria-label={`Edit ${s}`}><StepGear /></button>
                </Step>
              ))}
            </StepList>
          </SettingsBody>
        </SettingsPane>
        <ContextMenu />
      </Workspace>
    </Shell>
  );
}
